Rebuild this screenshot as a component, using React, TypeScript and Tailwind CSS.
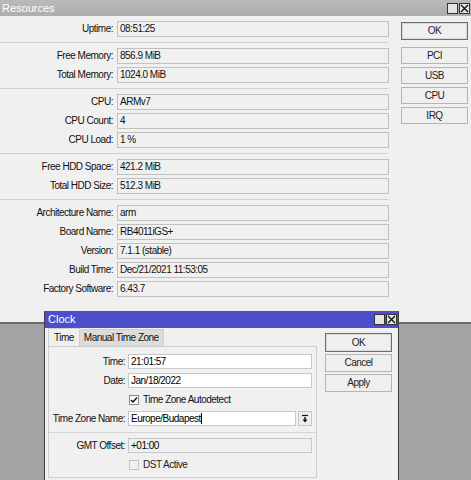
import React from 'react';

type Row = { label: string; value: string } | 'sep';

const resourceRows: Row[] = [
  { label: 'Uptime:', value: '08:51:25' },
  'sep',
  { label: 'Free Memory:', value: '856.9 MiB' },
  { label: 'Total Memory:', value: '1024.0 MiB' },
  'sep',
  { label: 'CPU:', value: 'ARMv7' },
  { label: 'CPU Count:', value: '4' },
  { label: 'CPU Load:', value: '1 %' },
  'sep',
  { label: 'Free HDD Space:', value: '421.2 MiB' },
  { label: 'Total HDD Size:', value: '512.3 MiB' },
  'sep',
  { label: 'Architecture Name:', value: 'arm' },
  { label: 'Board Name:', value: 'RB4011iGS+' },
  { label: 'Version:', value: '7.1.1 (stable)' },
  { label: 'Build Time:', value: 'Dec/21/2021 11:53:05' },
  { label: 'Factory Software:', value: '6.43.7' },
];

function WinIcons() {
  return (
    <div className="flex gap-[1px] items-center">
      <div className="w-[11px] h-[11px] border border-[#333] bg-[#e4e4e4]" />
      <div className="w-[11px] h-[11px] border border-[#333] bg-[#e4e4e4] flex items-center justify-center">
        <svg width="9" height="9" viewBox="0 0 9 9">
          <path d="M1 1L8 8M8 1L1 8" stroke="#111" strokeWidth="1.4" />
        </svg>
      </div>
    </div>
  );
}

function Button({ children, primary, className = '' }: { children: React.ReactNode; primary?: boolean; className?: string }) {
  return (
    <div
      className={`flex items-center justify-center bg-[#efefef] text-[#222] ${
        primary ? 'border border-[#6d6d6d] shadow-[inset_0_0_0_1px_#d8d8d8]' : 'border border-[#b4b4b4]'
      } ${className}`}
    >
      {children}
    </div>
  );
}

function ResourcesWindow() {
  return (
    <div className="h-[322px] bg-[#f0f0f0] flex flex-col">
      <div className="h-[16px] bg-gradient-to-b from-[#bababa] to-[#adadad] flex items-center justify-between pl-[2px] pr-[1px]">
        <span className="text-white text-[11px] tracking-normal">Resources</span>
        <WinIcons />
      </div>
      <div className="flex">
        <div className="w-[389px] pt-[3px]">
          {resourceRows.map((r, i) =>
            r === 'sep' ? (
              <div key={i} className="h-[8px] flex items-center">
                <div className="w-[388px] h-px bg-[#cfcfcf]" />
              </div>
            ) : (
              <div key={i} className="h-[19px] flex items-center">
                <div className="w-[114px] flex justify-end whitespace-nowrap pr-[1px] text-[#111]">{r.label}</div>
                <div className="ml-[3px] w-[272px] h-[16px] border border-[#c0c0c0] bg-[#f0f0f0] pl-[2px] flex items-center text-[#111]">
                  {r.value}
                </div>
              </div>
            )
          )}
        </div>
        <div className="ml-[12px] pt-[6px] flex flex-col w-[67px]">
          <Button primary className="h-[18px]">OK</Button>
          <Button className="h-[17px] mt-[7px]">PCI</Button>
          <Button className="h-[17px] mt-[3px]">USB</Button>
          <Button className="h-[17px] mt-[3px]">CPU</Button>
          <Button className="h-[17px] mt-[3px]">IRQ</Button>
        </div>
      </div>
    </div>
  );
}

function Check({ checked }: { checked?: boolean }) {
  return (
    <div
      className={`w-[10px] h-[10px] border flex items-center justify-center ${
        checked ? 'border-[#8a8a8a] bg-white' : 'border-[#c4c4c4] bg-[#f0f0f0]'
      }`}
    >
      {checked && (
        <svg width="8" height="8" viewBox="0 0 8 8">
          <path d="M1 4L3 6L7 1.5" stroke="#111" strokeWidth="1.5" fill="none" />
        </svg>
      )}
    </div>
  );
}

function ClockRow({ label, children }: { label: string; children: React.ReactNode }) {
  return (
    <div className="h-[19px] flex items-center">
      <div className="w-[72px] flex justify-end whitespace-nowrap text-[#111]">{label}</div>
      <div className="ml-[3px] flex items-center">{children}</div>
    </div>
  );
}

function ClockWindow() {
  return (
    <div className="absolute left-[44px] top-[311px] w-[355px] h-[180px] bg-[#f0f0f0] border-x border-[#3c3c3c]">
      <div className="h-[17px] bg-[#4b4fc9] flex items-center justify-between pl-[3px] pr-[1px]">
        <span className="text-white text-[11px] tracking-normal">Clock</span>
        <WinIcons />
      </div>
      <div className="flex">
        <div className="ml-[3px] w-[269px]">
          <div className="flex h-[18px] items-end">
            <div className="h-[18px] px-[5px] flex items-center border border-b-0 border-[#cfcfcf] bg-[#f0f0f0] text-[#111]">
              Time
            </div>
            <div className="h-[17px] px-[4px] flex items-center bg-[#dcdcdc] text-[#111] border-t border-r border-[#cfcfcf]">
              Manual Time Zone
            </div>
          </div>
          <div className="border border-[#cfcfcf] h-[132px] pt-[5px] pl-[4px]">
            <ClockRow label="Time:">
              <div className="w-[184px] h-[15px] border border-[#c8c8c8] bg-white pl-[2px] flex items-center">21:01:57</div>
            </ClockRow>
            <ClockRow label="Date:">
              <div className="w-[184px] h-[15px] border border-[#c8c8c8] bg-white pl-[2px] flex items-center">Jan/18/2022</div>
            </ClockRow>
            <div className="h-[19px] flex items-center pl-[76px] gap-[4px]">
              <Check checked />
              <span className="text-[#111]">Time Zone Autodetect</span>
            </div>
            <ClockRow label="Time Zone Name:">
              <div className="w-[168px] h-[15px] border border-[#c8c8c8] bg-white pl-[2px] flex items-center">
                Europe/Budapest<span className="w-px h-[11px] bg-black" />
              </div>
              <div className="ml-[2px] w-[14px] h-[15px] border border-[#c8c8c8] bg-[#ececec] flex items-center justify-center">
                <svg width="8" height="9" viewBox="0 0 8 9">
                  <path d="M1 1.5H7" stroke="#111" strokeWidth="1.2" />
                  <path d="M4 3V7" stroke="#111" strokeWidth="1.4" />
                  <path d="M1.5 5.5L4 8.5L6.5 5.5Z" fill="#111" />
                </svg>
              </div>
            </ClockRow>
            <div className="h-[8px] flex items-center -ml-[4px]">
              <div className="w-full h-px bg-[#d4d4d4]" />
            </div>
            <ClockRow label="GMT Offset:">
              <div className="w-[184px] h-[15px] border border-[#c8c8c8] bg-[#f0f0f0] pl-[2px] flex items-center">+01:00</div>
            </ClockRow>
            <div className="h-[19px] flex items-center pl-[76px] gap-[4px]">
              <Check />
              <span className="text-[#222]">DST Active</span>
            </div>
          </div>
        </div>
        <div className="ml-[8px] pt-[5px] flex flex-col w-[67px]">
          <Button primary className="h-[19px]">OK</Button>
          <Button className="h-[18px] mt-[2px]">Cancel</Button>
          <Button className="h-[18px] mt-[2px]">Apply</Button>
        </div>
      </div>
    </div>
  );
}

export default function App() {
  return (
    <div className="relative w-[471px] h-[480px] overflow-hidden bg-[#a3a3a3] font-['Liberation_Sans',Arial,sans-serif] text-[10px] tracking-[-0.5px] leading-none">
      <ResourcesWindow />
      <div className="h-[2px] bg-[#6a6a6a]" />
      <ClockWindow />
    </div>
  );
}
